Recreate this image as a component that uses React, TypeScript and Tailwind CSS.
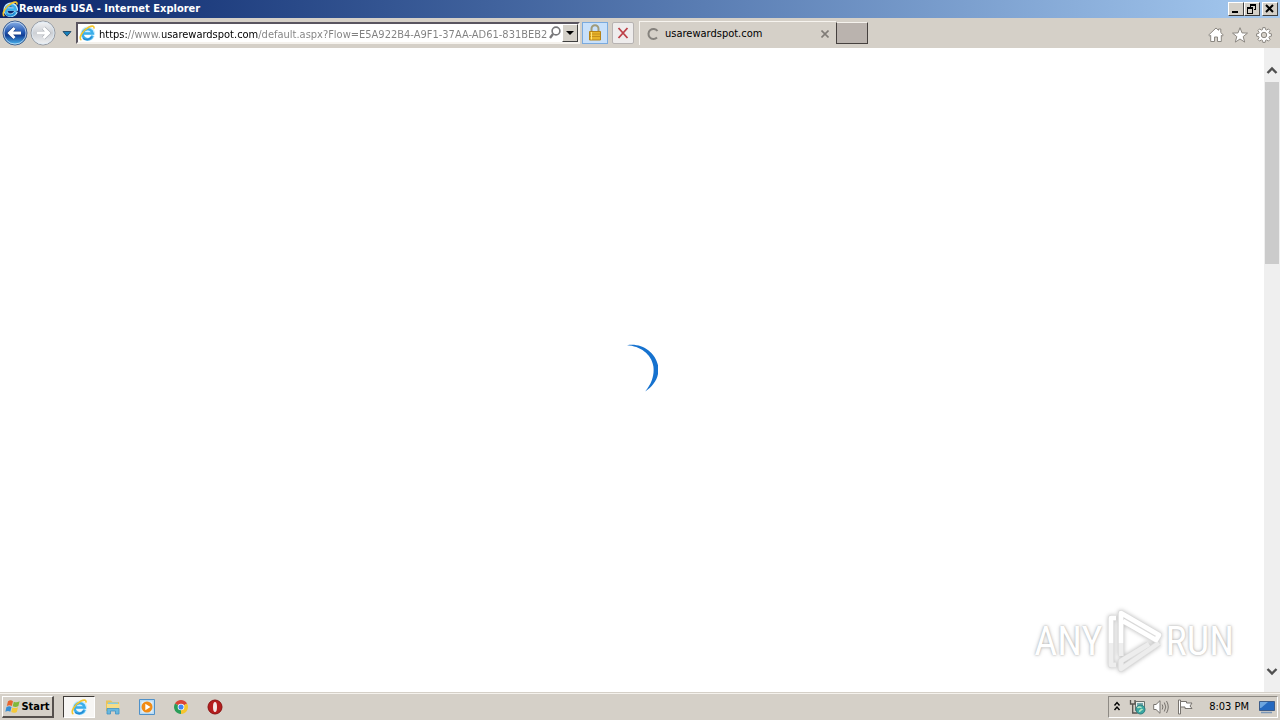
import type { ReactNode } from "react";

const uiFont = "font-['DejaVu_Sans_Condensed','DejaVu_Sans',sans-serif]";

function IEIcon({ className }: { className: string }) {
  return (
    <svg viewBox="0 0 16 16" className={className} aria-hidden="true">
      <path d="M14 10.4A5.5 5.5 0 1 1 14.2 8H4.6" fill="none" stroke="#c6ecff" strokeWidth="3.6" />
      <path d="M13.6 10.6A5.1 5.1 0 1 1 13.7 8.4H4.6" fill="none" stroke="#3aaeea" strokeWidth="2.5" />
      <path d="M4 13.2A5.6 5.6 0 0 0 12.6 11.6" fill="none" stroke="#2387d2" strokeWidth="1.4" />
      <path d="M2.4 15C-1.2 13.4 4 5 10 2c2.8-1.4 5.6-1.4 4.9 1.6" fill="none" stroke="#f4c52c" strokeWidth="1.6" />
    </svg>
  );
}

function RoundArrow({ label, forward }: { label: string; forward?: boolean }) {
  return (
    <button aria-label={label} className="size-7 shrink-0">
      <svg viewBox="0 0 28 28" className="size-7" aria-hidden="true">
        <defs>
          <linearGradient id="backFill" x1="0" y1="0" x2="0" y2="1">
            <stop offset="0" stopColor="#8fb4e8" />
            <stop offset=".45" stopColor="#2459b4" />
            <stop offset=".6" stopColor="#123f96" />
            <stop offset="1" stopColor="#4fbdf4" />
          </linearGradient>
          <linearGradient id="forwardFill" x1="0" y1="0" x2="0" y2="1">
            <stop offset="0" stopColor="#f4f5f7" />
            <stop offset=".5" stopColor="#cdd0d5" />
            <stop offset="1" stopColor="#f2f3f4" />
          </linearGradient>
        </defs>
        <circle cx="14" cy="14" r="12" fill={forward ? "url(#forwardFill)" : "url(#backFill)"} stroke={forward ? "#969ba3" : "#40608f"} />
        <circle cx="14" cy="14" r="11" fill="none" stroke="#dce9f7" strokeOpacity=".7" />
        <path
          d={forward ? "M8 14h11.5M14.5 9l5 5-5 5" : "M20 14H8.5M13.5 9l-5 5 5 5"}
          fill="none"
          stroke={forward ? "#aaaeb4" : "#17397c"}
          strokeWidth="4.2"
        />
        <path
          d={forward ? "M8 14h11.5M14.5 9l5 5-5 5" : "M20 14H8.5M13.5 9l-5 5 5 5"}
          fill="none"
          stroke="#fff"
          strokeWidth="3"
        />
      </svg>
    </button>
  );
}

function CaptionButton({ label, children }: { label: string; children: ReactNode }) {
  return (
    <button
      aria-label={label}
      className="flex h-3.5 w-4 items-center justify-center border border-t-white border-l-white border-r-[#404040] border-b-[#404040] bg-[#d4d0c8]"
    >
      <svg viewBox="0 0 12 12" className="size-3 shrink-0" shapeRendering="crispEdges" fill="none" stroke="#000" aria-hidden="true">
        {children}
      </svg>
    </button>
  );
}

function TitleBar() {
  return (
    <header className="flex h-[18px] items-center justify-between bg-linear-to-r from-[#0a246a] to-[#a6caf0] px-0.5">
      <div className="flex items-center gap-px">
        <IEIcon className="size-4" />
        <h1 className="text-[11px] leading-4 font-bold text-white">Rewards USA - Internet Explorer</h1>
      </div>
      <div className="flex">
        <CaptionButton label="Minimize">
          <path d="M2 9h6" strokeWidth="2" />
        </CaptionButton>
        <CaptionButton label="Restore">
          <path d="M4 1.5h6M4 2.5h6M4.5 2v3M9.5 2v5M8 6.5h2M1 4.5h6M1 5.5h6M1.5 5v5M6.5 5v5M1 10.5h6" />
        </CaptionButton>
        <span className="w-0.5" />
        <CaptionButton label="Close">
          <path d="M2 2l7 7M9 2l-7 7" strokeWidth="2" shapeRendering="auto" />
        </CaptionButton>
      </div>
    </header>
  );
}

function AddressBar() {
  return (
    <form className="flex h-[22px] w-[504px] shrink-0 items-center border-2 border-t-[#5a5560] border-l-[#5a5560] border-r-[#f5f2ed] border-b-[#f5f2ed] bg-white" onSubmit={(e) => e.preventDefault()}>
      <IEIcon className="ml-px size-4 shrink-0" />
      <input
        aria-label="Address"
        defaultValue="https://www.usarewardspot.com/default.aspx?Flow=E5A922B4-A9F1-37AA-AD61-831BEB2"
        className="ml-1 h-[18px] min-w-0 flex-1 bg-[linear-gradient(90deg,#000_29px,#808080_29px,#808080_63px,#000_63px,#000_159px,#808080_159px)] bg-clip-text pt-0.5 text-[11px] leading-4 text-transparent outline-none"
      />
      <button aria-label="Search" className="-ml-1 size-4 shrink-0">
        <svg viewBox="0 0 16 16" className="size-4" fill="none" stroke="#77777a" aria-hidden="true">
          <circle cx="10" cy="6" r="3.9" strokeWidth="1.6" />
          <path d="m7 9-3 4" strokeWidth="2.4" />
        </svg>
      </button>
      <button aria-label="Show address bar history" className="flex h-[18px] w-4 shrink-0 items-center justify-center border border-t-white border-l-white border-r-[#404040] border-b-[#404040] bg-[#d4d0c8]">
        <svg viewBox="0 0 8 4" className="h-1 w-2" aria-hidden="true"><path d="M0 0h8L4 4z" /></svg>
      </button>
    </form>
  );
}

function Toolbar() {
  return (
    <nav className="flex h-[30px] items-center bg-[#d5d0c8] pr-2 pl-px" aria-label="Browser">
      <RoundArrow label="Back" />
      <RoundArrow label="Forward" forward />
      <button aria-label="Recent pages" className="flex w-[19px] shrink-0 justify-center pt-px">
        <svg viewBox="0 0 10 6" className="h-1.5 w-2.5" aria-hidden="true">
          <path d="M1 .5h8L5 5.2z" fill="#1681bd" stroke="#28506e" />
        </svg>
      </button>
      <AddressBar />
      <button aria-label="Security report" className="ml-0.5 flex h-[22px] w-[26px] shrink-0 items-center justify-center border border-[#7aaade] bg-[#c8e0fa]">
        <svg viewBox="0 0 16 18" className="h-[18px] w-4" aria-hidden="true">
          <path d="M4.5 8V4.8a3.5 3.5 0 0 1 7 0V8" fill="none" stroke="#a09a78" strokeWidth="2" />
          <path d="M2.5 7.5h11V16h-11z" fill="#e8b42a" stroke="#b5831a" />
          <path d="M3 10h10M3 12.5h10" stroke="#c48e1c" />
          <path d="M4.5 8v7.5" stroke="#ffe47d" />
        </svg>
      </button>
      <button aria-label="Stop" className="ml-1 flex h-[22px] w-[22px] shrink-0 items-center justify-center rounded-xs border border-[#b7b3b2] bg-[#eeecec]">
        <svg viewBox="0 0 12 12" className="size-3" aria-hidden="true">
          <path d="M1.5 1 10.5 11M10.5 1 1.5 11" stroke="#bd4048" strokeWidth="1.8" />
        </svg>
      </button>
      <div className="ml-[5px] flex h-6 w-[197px] shrink-0 items-center border-t border-l border-[#f7f4ef] pr-1 pl-1.5">
        <svg viewBox="0 0 14 14" className="size-3.5 shrink-0" aria-hidden="true">
          <path d="M11.5 4A5 5 0 1 0 11 10.5" fill="none" stroke="#85827d" strokeWidth="2" />
        </svg>
        <span className="ml-[5px] flex-1 text-[11px] leading-4">usarewardspot.com</span>
        <button aria-label="Close tab" className="flex size-3.5 items-center justify-center">
          <svg viewBox="0 0 8 8" className="size-2" aria-hidden="true"><path d="m.5.5 7 7m0-7-7 7" stroke="#807c77" strokeWidth="1.6" /></svg>
        </button>
      </div>
      <button aria-label="New tab" className="h-[22px] w-8 shrink-0 border border-t-[#f5f2ed] border-l-[#45403e] border-r-[#45403e] border-b-[#45403e] bg-[#bab3ae]" />
      <div className="ml-auto flex gap-2 pt-1">
        <button aria-label="Home" className="size-4">
          <svg viewBox="0 0 16 16" className="size-4" fill="#fff" stroke="#8b8781" strokeLinejoin="round" aria-hidden="true">
            <path d="M.7 8 8 1l2.5 2.3V2h2.3v3.6L15.3 8l-1.2 1.1-.8-.7v6.1H9.5V10h-3v4.5H2.7V8.4l-.8.7z" />
          </svg>
        </button>
        <button aria-label="Favorites" className="size-4">
          <svg viewBox="0 0 16 16" className="size-4" fill="#fff" stroke="#8b8781" strokeLinejoin="round" aria-hidden="true">
            <path d="m8 .7 2 5.2 5.5.2-4.3 3.5 1.5 5.5L8 12l-4.7 3.1 1.5-5.5L.5 6.1 6 5.9z" />
          </svg>
        </button>
        <button aria-label="Tools" className="size-4">
          <svg viewBox="0 0 16 16" className="size-4" fill="#fff" stroke="#8b8781" aria-hidden="true">
            <path d="M6.8.6h2.4l.3 2 1.2.5 1.7-1.2 1.7 1.7-1.2 1.7.5 1.2 2 .3v2.4l-2 .3-.5 1.2 1.2 1.7-1.7 1.7-1.7-1.2-1.2.5-.3 2H6.8l-.3-2-1.2-.5-1.7 1.2-1.7-1.7 1.2-1.7-.5-1.2-2-.3V6.8l2-.3.5-1.2-1.2-1.7 1.7-1.7 1.7 1.2 1.2-.5z" />
            <circle cx="8" cy="8" r="2.7" fill="#d5d0c8" />
          </svg>
        </button>
      </div>
    </nav>
  );
}

function Watermark() {
  const word = "pt-1 text-[40px] leading-none text-white [text-shadow:0_0_2px_#aaa,0_0_4px_#ccc] font-['Roboto_Condensed','Liberation_Sans_Narrow','Liberation_Sans',sans-serif]";
  return (
    <div className="absolute right-[30px] bottom-[18px] flex items-center gap-0.5">
      <span className={word}>ANY</span>
      <svg viewBox="7 2 59 68" className="h-[68px] w-[59px] drop-shadow-[0_0_2px_#bbb]" fill="none" strokeLinejoin="round" aria-hidden="true">
        <g stroke="#dcdcdc" strokeWidth="6">
          <path d="M18 14h-5v47h5" />
          <path d="m61 39-38 26v-8l28-17" />
          <path d="M23 52V9l38 22-3 5-33-19" />
        </g>
        <path d="M18 14h-5v25" stroke="#fff" strokeWidth="4.5" />
        <path d="M13 39v22h5" stroke="#eee" strokeWidth="4.5" />
        <path d="m61 39-38 26v-8l28-17" stroke="#ededed" strokeWidth="4.5" />
        <path d="M23 39v13" stroke="#eee" strokeWidth="4.5" />
        <path d="M23 39V9l38 22-3 5-33-19" stroke="#fff" strokeWidth="4.5" />
      </svg>
      <span className={word}>RUN</span>
    </div>
  );
}

function Viewport() {
  return (
    <div className="flex flex-1">
      <main className="relative flex flex-1 items-center justify-center bg-white" aria-label="Page">
        <svg viewBox="-1 0 52 52" className="size-[52px]" role="img" aria-label="Loading">
          <path d="M20 1.3C35-1.5 50 9 51.4 24c.6 10-5 18-13.2 23.4 7-8 9.2-17 8.200-25C44.500 10 33 2 20 1.300z" fill="#1672cf" />
        </svg>
        <Watermark />
      </main>
      <aside className="flex w-4 flex-col items-center bg-[#efefef] pt-4" aria-label="Scrollbar">
        <button aria-label="Scroll up" className="flex h-[18px] w-full items-start justify-center pt-0.5">
          <svg viewBox="0 0 12 8" className="h-2 w-3" aria-hidden="true"><path d="m1.5 7 4.5-4.500L10.500 7" fill="none" stroke="#505050" strokeWidth="2.400" /></svg>
        </button>
        <div className="h-[182px] w-3.5 bg-[#cbcbcb]" />
        <button aria-label="Scroll down" className="mt-auto mb-3 flex h-4 w-full items-center justify-center">
          <svg viewBox="0 0 12 8" className="h-2 w-3" aria-hidden="true"><path d="M1.5 1 6 5.500 10.500 1" fill="none" stroke="#505050" strokeWidth="2.400" /></svg>
        </button>
      </aside>
    </div>
  );
}

function Taskbar() {
  return (
    <footer className="flex h-7 items-center border-t border-[#d5d0c8] bg-[#d5d0c8] pt-px pr-0.5 pl-0.5 shadow-[inset_0_1px_0_#f5f2ed]">
      <button className="flex h-[22px] w-[52px] items-center justify-center border border-r-2 border-b-2 border-t-white border-l-white border-r-[#55504d] border-b-[#55504d] text-[11px] leading-4 font-bold">
        <svg viewBox="0 0 16 16" className="size-4 shrink-0" aria-hidden="true">
          <path d="M3 2.2C5 1 6.5 1.2 8 2.2L6.8 7C5.2 6 3.7 6 1.8 7z" fill="#e7652e" />
          <path d="M8.8 2.7c2 1 3.8.8 5.8-.4l-1.2 4.8c-2 1.2-3.8 1.2-5.7.1z" fill="#80b83c" />
          <path d="M1.5 8c2-1 3.5-1 5 0l-1.2 4.8c-1.5-1-3-1-5 0z" fill="#368ed5" />
          <path d="M7.4 8.4c1.8 1 3.6.9 5.6-.2L11.8 13c-2 1.1-3.8 1.1-5.6.1z" fill="#f4c93a" />
        </svg>
        Start
      </button>
      <div className="ml-[9px] flex items-center gap-0.5">
        <button aria-label="Internet Explorer" className="flex h-[22px] w-8 items-center justify-center border border-t-[#3f3b38] border-l-[#3f3b38] border-r-white border-b-white bg-[#f7f6f4]">
          <IEIcon className="size-4" />
        </button>
        <button aria-label="File Explorer" className="flex h-[22px] w-8 items-center justify-center">
          <svg viewBox="0 0 16 16" className="size-4" aria-hidden="true">
            <path d="M1 1.500h5L7.500 3H14v9H1z" fill="#e9c35a" />
            <path d="M3 3.500h10V8H3z" fill="#85cce4" />
            <path d="M2 5h12.500v5H2z" fill="#f5dd88" />
            <path d="M2 15V9.500h12V15h-3.500v-3h-5v3z" fill="#69b8de" stroke="#3f93c4" strokeWidth=".8" />
          </svg>
        </button>
        <button aria-label="Media Player" className="flex h-[22px] w-8 items-center justify-center">
          <svg viewBox="0 0 16 16" className="size-4" aria-hidden="true">
            <path d="M.5.5h15v15H.5z" fill="#b9dbf4" stroke="#4f91c9" />
            <path d="M2.5 2.5h11v11h-11z" fill="#e5f0f8" />
            <circle cx="8" cy="8" r="5.5" fill="#f18b14" />
            <path d="M6.300 4.800 11.500 8l-5.200 3.200z" fill="#fff" />
          </svg>
        </button>
        <button aria-label="Chrome" className="flex h-[22px] w-8 items-center justify-center">
          <svg viewBox="0 0 16 16" className="size-3.5" aria-hidden="true">
            <path d="M8 8 1.1 4A8 8 0 0 1 14.900 4z" fill="#db4437" />
            <path d="M8 8 14.900 4A8 8 0 0 1 8 16z" fill="#f6c52d" />
            <path d="M8 8v8A8 8 0 0 1 1.100 4z" fill="#2a9d58" />
            <circle cx="8" cy="8" r="3.8" fill="#fff" />
            <circle cx="8" cy="8" r="2.9" fill="#4285f4" />
          </svg>
        </button>
        <button aria-label="Opera" className="flex h-[22px] w-8 items-center justify-center">
          <svg viewBox="0 0 16 16" className="size-4" aria-hidden="true">
            <circle cx="8" cy="8" r="7" fill="#b51d1d" stroke="#8a1111" />
            <ellipse cx="8" cy="8" rx="2" ry="5" fill="#f4e8e6" />
          </svg>
        </button>
      </div>
      <div className="ml-auto flex h-[22px] items-center border border-t-[#8e8a84] border-l-[#8e8a84] border-r-white border-b-white pr-0.5 pl-1">
        <button aria-label="Show hidden icons" className="mr-2 flex w-2 justify-center pb-0.5">
          <svg viewBox="0 0 8 10" className="h-2.5 w-2" fill="none" stroke="#000" strokeWidth="1.4" aria-hidden="true">
            <path d="m1.500 4.500 2.500-3 2.500 3M1.500 9 4 6l2.500 3" />
          </svg>
        </button>
        <button aria-label="Network" className="mr-1.5">
          <svg viewBox="0 0 18 16" className="h-4 w-[18px]" aria-hidden="true">
            <path d="M6.500 2.500h9v9h-9z" fill="#e8eeea" stroke="#686f6b" />
            <path d="M8 4h6v6H8z" fill="#76a9ad" />
            <path d="M1.500 1v4h4.500V1M3.700 5v9h5" fill="none" stroke="#55534f" strokeWidth="1.300" />
            <circle cx="11.500" cy="10.500" r="4.500" fill="#3aa7a2" stroke="#2d7d7e" />
            <path d="M8.500 9c2-2 3 0 4-1M10.500 13c0-2 2-2 3-3" fill="none" stroke="#b6e5c1" strokeWidth="1.500" />
          </svg>
        </button>
        <button aria-label="Volume" className="mr-2">
          <svg viewBox="0 0 16 16" className="size-4" fill="none" stroke="#77736e" aria-hidden="true">
            <path d="M.7 5.500H3L7 1.700v12.600l-4-3.800H.7z" fill="#fff" />
            <path d="M9.200 5.500q1.500 2.500 0 5M11.300 3.500q3 4.500 0 9M13.500 2q3.500 6 0 12" />
          </svg>
        </button>
        <button aria-label="Action Center" className="mr-4">
          <svg viewBox="0 0 16 16" className="size-4" fill="#fff" stroke="#77736e" aria-hidden="true">
            <path d="M1.500 1h2v14h-2z" />
            <path d="M3.500 2.500h6V4H15l-2 3 2 2.500H8V8H3.500z" />
          </svg>
        </button>
        <time className="mr-2.5 text-[11px] leading-4">8:03 PM</time>
        <button aria-label="Show desktop">
          <svg viewBox="0 0 16 16" className="size-4" aria-hidden="true">
            <path d="M.5 2.500h15v9H.5z" fill="#2569c0" stroke="#3d5c89" />
            <path d="M1 3h8L2 9H1z" fill="#6da5df" />
            <path d="M2 13.500h11" stroke="#7a96b6" strokeWidth="1.500" />
          </svg>
        </button>
      </div>
    </footer>
  );
}

export default function App() {
  return (
    <div className={`flex min-h-screen flex-col text-black ${uiFont}`}>
      <TitleBar />
      <Toolbar />
      <Viewport />
      <Taskbar />
    </div>
  );
}
